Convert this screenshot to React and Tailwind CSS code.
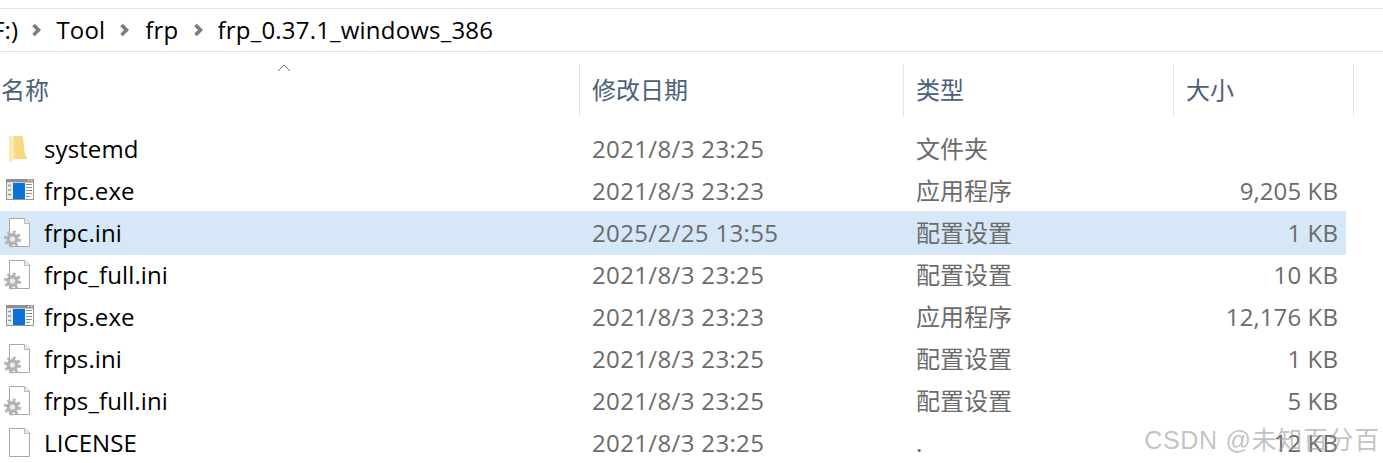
const FONT = "font-['Open_Sans','Noto_Sans_CJK_SC',sans-serif]";

function Folder() {
  return (
    <svg width="30" height="30" viewBox="0 0 30 30">
      <path d="M13 2 L23 2 L24.5 18 L27 24 L27 25 L13 25 Z" fill="#f7d983" />
      <path d="M9 2 L14 3.5 L14.5 25 L10 28.5 L9 28 Z" fill="#fce9ae" />
    </svg>
  );
}
function Exe() {
  return (
    <svg width="34" height="30" viewBox="0 0 34 30">
      <rect x="6.5" y="3.5" width="27" height="20" fill="#fff" stroke="#969696" />
      <rect x="6" y="3" width="28" height="3.5" fill="#909090" />
      <path d="M28 4.5 H29.5 M31 4.5 H32.5" stroke="#e4e4e4" strokeWidth="1.5" />
      <rect x="7" y="6.5" width="6" height="16.5" fill="#ececec" />
      <path d="M8 9.5 H11 M8 14 H11 M8 18.5 H11" stroke="#9a9a9a" strokeWidth="1.4" />
      <rect x="13" y="7" width="12" height="16" fill="#0a74d6" />
      <path d="M26 8.5 H32 M26 11.5 H32 M26 14.5 H32 M26 17.5 H32 M26 20.5 H30" stroke="#8d8d8d" strokeWidth="1.2" />
    </svg>
  );
}
function Doc({ gear }) {
  return (
    <svg width="30" height="30" viewBox="0 0 30 30">
      <path d="M9.5 0.5 H25 L29.5 5 V28.5 H9.5 Z" fill="#fff" stroke="#a8a8a8" />
      <path d="M24.5 0.5 V5.5 H29.5" fill="#ececec" stroke="#b8b8b8" />
      {gear && (
        <g>
          <circle cx="12.5" cy="21" r="6" fill="#b0b2b3" />
          <circle cx="12.5" cy="21" r="7" fill="none" stroke="#b0b2b3" strokeWidth="3" strokeDasharray="2.8 2.7" />
          <circle cx="12.5" cy="21" r="2.6" fill="#ececec" />
        </g>
      )}
    </svg>
  );
}

const rows = [
  ["folder", "systemd", "2021/8/3 23:25", "文件夹", ""],
  ["exe", "frpc.exe", "2021/8/3 23:23", "应用程序", "9,205 KB"],
  ["gear", "frpc.ini", "2025/2/25 13:55", "配置设置", "1 KB", true],
  ["gear", "frpc_full.ini", "2021/8/3 23:25", "配置设置", "10 KB"],
  ["exe", "frps.exe", "2021/8/3 23:23", "应用程序", "12,176 KB"],
  ["gear", "frps.ini", "2021/8/3 23:25", "配置设置", "1 KB"],
  ["gear", "frps_full.ini", "2021/8/3 23:25", "配置设置", "5 KB"],
  ["doc", "LICENSE", "2021/8/3 23:25", ".", "12 KB"],
];

function Chevron({ className }) {
  return (
    <svg width="12" height="14" viewBox="0 0 12 14" className={className}>
      <path d="M2.5 2 L7.5 7 L2.5 12" fill="none" stroke="#7d7d7d" strokeWidth="3.6" />
    </svg>
  );
}

export default function App() {
  return (
    <div className={`relative w-[1383px] h-[463px] overflow-hidden bg-white ${FONT}`}>
      <div className="mt-2 h-[42px] flex items-center border-y border-[#e2e2e2] text-[24px] tracking-[0.2px] text-black overflow-hidden box-content">
        <span className="ml-[-8px]">F:)</span>
        <Chevron className="mx-[13px]" />
        <span>Tool</span>
        <Chevron className="mx-[14px]" />
        <span>frp</span>
        <Chevron className="ml-[14px] mr-[13px]" />
        <span>frp_0.37.1_windows_386</span>
      </div>

      <div className="relative mt-3 h-[52px] grid grid-cols-[579px_324px_270px_181px] text-[24px] text-[#4c607a]">
        <div className="pl-[1px] flex items-center">名称</div>
        <div className="pl-3 flex items-center border-l border-[#e3e3e3]">修改日期</div>
        <div className="pl-3 flex items-center border-l border-[#e3e3e3]">类型</div>
        <div className="pl-3 flex items-center border-x border-[#e3e3e3]">大小</div>
        <svg width="14" height="8" viewBox="0 0 14 8" className="absolute left-[277px] top-[0px]">
          <path d="M1 7 L7 1 L13 7" fill="none" stroke="#6f6f6f" strokeWidth="1" />
        </svg>
      </div>

      <div className="mt-3 w-[1346px] text-[24px]">
        {rows.map(([icon, name, date, type, size, sel]) => (
          <div
            key={name}
            className={`grid grid-cols-[579px_324px_270px_173px] items-center ${sel ? "h-11 -my-px bg-[#d6e7f8]" : "h-[42px]"}`}
          >
            <div className="flex items-center text-black tracking-[0.1px]">
              <div className="w-[44px] h-[30px] shrink-0">
                {icon === "folder" && <Folder />}
                {icon === "exe" && <Exe />}
                {icon === "gear" && <Doc gear />}
                {icon === "doc" && <Doc />}
              </div>
              <span>{name}</span>
            </div>
            <div className="pl-[13px] text-[#6b6b6b] tracking-[0.35px]">{date}</div>
            <div className="pl-[13px] text-[#6b6b6b]">{type}</div>
            <div className="pr-2 text-right text-[#6b6b6b] tracking-[0.1px]">{size}</div>
          </div>
        ))}
      </div>

      <div className="absolute right-[3px] bottom-[10px] text-[25px] leading-none tracking-[0.7px] text-[#9a9a9a]/60 font-['Liberation_Sans','Noto_Sans_CJK_SC',sans-serif]">
        CSDN @未知百分百
      </div>
    </div>
  );
}
